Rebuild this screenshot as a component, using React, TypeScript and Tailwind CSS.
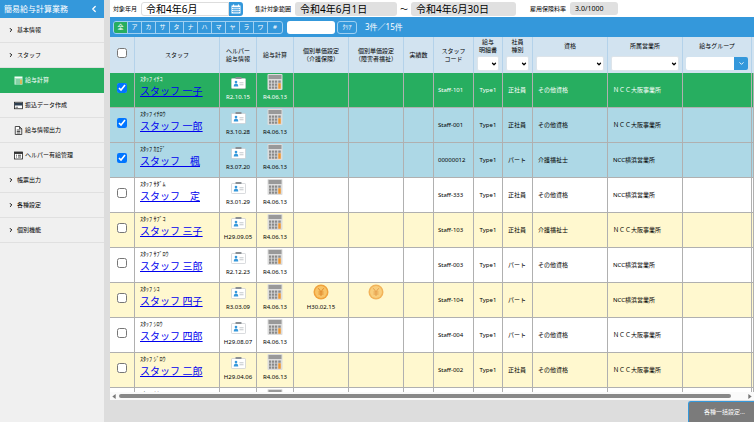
import React, { useState } from 'react';
import { ChevronDown, ChevronLeft, ChevronRight } from 'lucide-react';

const MENU = [
  { label: '基本情報' },
  { label: 'スタッフ' },
  { label: '給与計算', icon: 'calc', active: true },
  { label: '振込データ作成', icon: 'card' },
  { label: '給与情報出力', icon: 'file' },
  { label: 'ヘルパー有給管理', icon: 'list' },
  { label: '帳票出力' },
  { label: '各種設定' },
  { label: '個別機能' },
];

const KANA = ['全', 'ア', 'カ', 'サ', 'タ', 'ナ', 'ハ', 'マ', 'ヤ', 'ラ', 'ワ', '#'];

const STAFF = [
  { kana: 'ｽﾀｯﾌ ｲﾁｺ', name: 'スタッフ 一子', helper: 'R2.10.15', code: 'Staff-101', kind: '正社員', license: 'その他資格', office: 'ＮＣＣ大阪事業所' },
  { kana: 'ｽﾀｯﾌ ｲﾁﾛｳ', name: 'スタッフ 一郎', helper: 'R3.10.28', code: 'Staff-001', kind: '正社員', license: 'その他資格', office: 'ＮＣＣ大阪事業所' },
  { kana: 'ｽﾀｯﾌ ｶｴﾃﾞ', name: 'スタッフ　楓', helper: 'R3.07.20', code: '00000012', kind: 'パート', license: '介護福祉士', office: 'NCC横浜営業所' },
  { kana: 'ｽﾀｯﾌ ｻﾀﾞﾑ', name: 'スタッフ　定', helper: 'R3.01.29', code: 'Staff-333', kind: '正社員', license: 'その他資格', office: 'NCC横浜営業所' },
  { kana: 'ｽﾀｯﾌ ｻﾌﾞｺ', name: 'スタッフ 三子', helper: 'H29.09.05', code: 'Staff-103', kind: '正社員', license: '介護福祉士', office: 'ＮＣＣ大阪事業所' },
  { kana: 'ｽﾀｯﾌ ｻﾌﾞﾛｳ', name: 'スタッフ 三郎', helper: 'R2.12.23', code: 'Staff-003', kind: 'パート', license: 'その他資格', office: 'NCC横浜営業所' },
  { kana: 'ｽﾀｯﾌ ｼｺ', name: 'スタッフ 四子', helper: 'R3.03.09', code: 'Staff-104', kind: 'パート', license: '', office: 'NCC横浜営業所', care: 'H30.02.15', coin: true },
  { kana: 'ｽﾀｯﾌ ｼﾛｳ', name: 'スタッフ 四郎', helper: 'H29.08.07', code: 'Staff-004', kind: 'パート', license: 'その他資格', office: 'ＮＣＣ大阪事業所' },
  { kana: 'ｽﾀｯﾌ ｼﾞﾛｳ', name: 'スタッフ 二郎', helper: 'H29.04.06', code: 'Staff-002', kind: '正社員', license: 'その他資格', office: 'ＮＣＣ大阪事業所' },
];

const MenuIcon = ({ type }) => {
  if (type === 'calc') {
    return (
      <svg viewBox="0 0 18 18" className="h-[9px] w-[9px]">
        <rect x="1" y="1" width="16" height="16" fill="#f4fff8" />
        <path d="M1 6h16M1 10h16M1 14h16M6 6v11M10 6v11" stroke="#27ae60" strokeWidth="1.3" />
        <path d="M14 7v9" stroke="#f39c12" strokeWidth="2.4" />
      </svg>
    );
  }
  if (type === 'card') {
    return (
      <svg viewBox="0 0 18 18" className="h-[9px] w-[9px]">
        <rect x="0.8" y="2.5" width="16.4" height="13" fill="#fff" stroke="#222" strokeWidth="1.6" />
        <path d="M1 4h16v5H1z" fill="#2c3e50" />
        <path d="M3 12.5h5" stroke="#333" strokeWidth="1.4" />
      </svg>
    );
  }
  if (type === 'file') {
    return (
      <svg viewBox="0 0 18 18" className="h-[9px] w-[9px]" fill="none" stroke="#222" strokeWidth="1.6">
        <path d="M2.5 1h8.5l4.5 4.5V17h-13z" fill="#fff" />
        <path d="M11 1v4.5h4.5M5.5 8h7M5.5 11h7M5.5 14h7" />
      </svg>
    );
  }
  return (
    <svg viewBox="0 0 18 18" className="h-[9px] w-[9px]" fill="none" stroke="#222" strokeWidth="1.6">
      <rect x="1" y="2" width="16" height="14" fill="#fff" />
      <path d="M1 4h16" strokeWidth="3.5" />
      <path d="M4 8.5h2M8 8.5h6M4 12h2M8 12h6" />
    </svg>
  );
};

const IdCardIcon = () => (
  <svg viewBox="0 0 30 24" className="block h-3 w-[15px]">
    <rect x="1" y="3" width="28" height="20" rx="1.5" fill="#fff" stroke="#c8ccd0" strokeWidth="1.4" />
    <rect x="9" y="0" width="12" height="4" rx="1" fill="#8b9095" />
    <circle cx="10" cy="10" r="2.6" fill="#3498db" />
    <path d="M5.5 19c0-4.500 2-6 4.500-6s4.500 1.500 4.500 6z" fill="#3498db" />
    <path d="M17 11.5h8M17 15.500h8" stroke="#b4bac0" strokeWidth="1.6" />
  </svg>
);

const CalculatorIcon = () => (
  <svg viewBox="0 0 32 32" className="block h-4 w-4">
    <rect x="1" y="0" width="30" height="32" rx="2" fill="#dcdcdc" />
    <rect x="3" y="2" width="26" height="8" fill="#999" />
    {[13, 19, 25].map((y) =>
      [4, 10, 16].map((x) => <rect key={`${x}-${y}`} x={x} y={y} width="4.5" height="4.5" fill="#8a8a8a" />)
    )}
    <rect x="22.5" y="13" width="5" height="4.5" fill="#8a8a8a" />
    <rect x="22.5" y="18.5" width="5" height="11" fill="#f0962e" />
  </svg>
);

const CoinIcon = () => (
  <svg viewBox="0 0 32 32" className="block h-4 w-4" fill="none">
    <circle cx="16" cy="16" r="15" fill="#f0a23c" />
    <circle cx="16" cy="16" r="12" fill="#f8c468" />
    <path d="M10.5 8.5l5.5 7 5.5-7M16 15.5V24M11 16h10M11 20h10" stroke="#e08a2c" strokeWidth="2" />
  </svg>
);

const CalendarIcon = () => (
  <svg viewBox="0 0 20 20" className="h-[10px] w-[10px]">
    <path d="M1 3h18v16H1z" fill="#fff" />
    <path d="M5 1v4M15 1v4" stroke="#fff" strokeWidth="2.5" />
    <path d="M2 7h16M2 11h16M2 15h16M6 7v11M10 7v11M14 7v11" stroke="#3498db" strokeWidth="1.3" />
  </svg>
);

const FilterSelect = ({ label }) => (
  <div className="relative mx-[3px] mt-[2px]">
    <select aria-label={label} className="block h-[15px] w-full appearance-none rounded-[2px] border border-[#dde4ea] bg-white">
      <option></option>
    </select>
    <ChevronDown className="pointer-events-none absolute right-[2px] top-[5px] h-[6px] w-[6px] text-black" strokeWidth={5} />
  </div>
);

const th = 'border-r border-[#b4d2ea] p-0 text-center align-middle font-normal';
const thTop = 'border-r border-[#b4d2ea] p-0 text-center align-top font-normal';
const td = 'border-b border-r border-[#b0b0b0] p-0 align-middle';
const tdTop = 'border-b border-r border-[#b0b0b0] p-0 align-top';

const StaffRow = ({ staff, index, checked, onToggle }) => {
  let tone = index % 2 === 0 ? 'bg-[#fff8cf]' : 'bg-white';
  if (checked) tone = 'bg-[#add8e6]';
  if (index === 0) tone = 'bg-[#27ae60] text-white';

  return (
    <tr className={`h-[35px] ${tone}`}>
      <td className={td}>
        <input type="checkbox" aria-label={staff.name} checked={checked} onChange={onToggle} className="mx-auto mb-1 block h-[10px] w-[10px]" />
      </td>
      <td className={`${tdTop} pl-[5px] pt-[2px]`}>
        <div>{staff.kana}</div>
        <a href="#" className="block whitespace-nowrap text-[10px] leading-[16px] text-[#0000ee] underline">{staff.name}</a>
      </td>
      <td className={`${tdTop} pt-[4px]`}>
        <div className="flex flex-col items-center gap-[4px]">
          <IdCardIcon />
          <span>{staff.helper}</span>
        </div>
      </td>
      <td className={`${tdTop} pt-[1px]`}>
        <div className="flex flex-col items-center gap-[3px]">
          <CalculatorIcon />
          <span>R4.06.13</span>
        </div>
      </td>
      <td className={`${tdTop} pt-[1px]`}>
        {staff.care && (
          <div className="flex flex-col items-center gap-[3px]">
            <CoinIcon />
            <span>{staff.care}</span>
          </div>
        )}
      </td>
      <td className={`${tdTop} pt-[1px]`}>
        {staff.coin && <div className="flex justify-center opacity-80"><CoinIcon /></div>}
      </td>
      <td className={td}></td>
      <td className={`${td} pl-[4px]`}>{staff.code}</td>
      <td className={`${td} text-center`}>Type1</td>
      <td className={`${td} pl-[5px]`}>{staff.kind}</td>
      <td className={`${td} pl-[5px]`}>{staff.license}</td>
      <td className={`${td} pl-[5px]`}>{staff.office}</td>
      <td className={td}></td>
      <td className={td}></td>
    </tr>
  );
};

export default function App() {
  const [checked, setChecked] = useState([0, 1, 2]);
  const [initial, setInitial] = useState('全');

  const toggle = (i) => {
    setChecked(checked.includes(i) ? checked.filter((n) => n !== i) : [...checked, i]);
  };

  return (
    <div className="flex h-screen gap-[6px] overflow-hidden bg-[#dddddd] font-['Noto_Sans','Noto_Sans_CJK_JP',sans-serif] text-[6px] leading-[8px] text-black">
      <aside className="w-[104px] shrink-0 bg-[#f0f0f0]">
        <header className="flex h-[18px] items-center justify-between bg-[#3498db] pl-1 pr-[5px] text-[8px] text-white">
          <span>簡易給与計算業務</span>
          <button aria-label="メニューを閉じる"><ChevronLeft className="h-[10px] w-[10px]" strokeWidth={3} /></button>
        </header>
        <nav>
          {MENU.map((item) => (
            <a
              key={item.label}
              href="#"
              className={`flex h-[25px] items-center border-b ${item.active ? 'border-[#27ae60] bg-[#27ae60] text-white' : 'border-[#e0e0e0]'} ${item.icon ? 'gap-[2px] pl-[14px]' : 'gap-[3px] pl-[8px]'}`}
            >
              {item.icon ? <MenuIcon type={item.icon} /> : <ChevronRight className="h-[6px] w-[6px]" strokeWidth={4} />}
              {item.label}
            </a>
          ))}
        </nav>
      </aside>

      <main className="flex min-w-0 flex-1 flex-col">
        <div className="flex h-[17px] shrink-0 items-center bg-white pl-[3px]">
          <label htmlFor="month" className="mr-[4px]">対象年月</label>
          <input id="month" defaultValue="令和4年6月" className="h-[14px] w-[88px] rounded-l-[3px] border border-[#ddd] pl-[4px] text-[10px]" />
          <button aria-label="カレンダー" className="flex h-[14px] w-[14px] items-center justify-center rounded-r-[3px] bg-[#3498db]">
            <CalendarIcon />
          </button>
          <label htmlFor="from" className="ml-[12px] mr-[4px]">集計対象範囲</label>
          <input id="from" readOnly value="令和4年6月1日" className="h-[14px] w-[102px] rounded-[3px] bg-[#e0e0e0] pl-[5px] text-[10px]" />
          <span className="w-[14px] text-center text-[8px]">～</span>
          <input aria-label="集計終了日" readOnly value="令和4年6月30日" className="h-[14px] w-[105px] rounded-[3px] bg-[#e0e0e0] pl-[5px] text-[10px]" />
          <label htmlFor="rate" className="ml-[14px] mr-[4px]">雇用保険料率</label>
          <input id="rate" readOnly value="3.0/1000" className="h-[13px] w-[48px] rounded-[3px] bg-[#e0e0e0] pl-[5px] text-[7px]" />
        </div>

        <div className="flex h-[20px] shrink-0 items-center bg-[#3498db] pl-[3px] text-white">
          <div className="flex overflow-hidden rounded-[3px] border border-[#9fd0f2]">
            {KANA.map((k) => (
              <button
                key={k}
                onClick={() => setInitial(k)}
                className={`h-[11px] w-[14px] border-r border-[#9fd0f2] last:border-r-0 ${k === initial ? 'bg-[#27ae60]' : ''}`}
              >
                {k}
              </button>
            ))}
          </div>
          <input aria-label="スタッフ検索" className="ml-[4px] h-[13px] w-[48px] rounded-[3px] bg-white pl-1 text-[8px] text-black" />
          <button className="ml-[2px] h-[13px] w-[20px] rounded-[3px] border border-[#9fd0f2]">ｸﾘｱ</button>
          <span className="ml-[8px] text-[8px]">3件／15件</span>
        </div>

        <div className="min-h-0 flex-1 overflow-hidden bg-white">
          <table className="w-full table-fixed border-separate border-spacing-0">
            <colgroup>
              <col className="w-[25px]" />
              <col className="w-[85px]" />
              <col className="w-[37px]" />
              <col className="w-[37px]" />
              <col className="w-[55px]" />
              <col className="w-[55px]" />
              <col className="w-[30px]" />
              <col className="w-[40px]" />
              <col className="w-[29px]" />
              <col className="w-[30px]" />
              <col className="w-[75px]" />
              <col className="w-[75px]" />
              <col />
              <col className="w-[2px]" />
            </colgroup>
            <thead>
              <tr className="h-[36px] bg-[#d2e3f0]">
                <th className={th}>
                  <input type="checkbox" aria-label="全選択" className="mx-auto mb-1 block h-[10px] w-[10px]" />
                </th>
                <th className={th}>スタッフ</th>
                <th className={th}>ヘルパー<br />給与情報</th>
                <th className={th}>給与計算</th>
                <th className={th}>個別単価設定<br />（介護保険）</th>
                <th className={th}>個別単価設定<br />（障害者福祉）</th>
                <th className={th}>実績数</th>
                <th className={th}>スタッフ<br />コード</th>
                <th className={thTop}>
                  <div className="pt-[1px]">給与<br />明細書</div>
                  <FilterSelect label="給与明細書" />
                </th>
                <th className={thTop}>
                  <div className="pt-[1px]">社員<br />種別</div>
                  <FilterSelect label="社員種別" />
                </th>
                <th className={thTop}>
                  <div className="pb-[4px] pt-[5px]">資格</div>
                  <FilterSelect label="資格" />
                </th>
                <th className={thTop}>
                  <div className="pb-[4px] pt-[5px]">所属営業所</div>
                  <FilterSelect label="所属営業所" />
                </th>
                <th className={thTop}>
                  <div className="pb-[4px] pt-[5px]">給与グループ</div>
                  <div className="mx-[3px] mt-[3px] flex h-[13px]">
                    <input aria-label="給与グループ" className="min-w-0 flex-1 rounded-l-[2px] bg-white" />
                    <button aria-label="給与グループを選択" className="flex w-[14px] items-center justify-center rounded-r-[2px] bg-[#3498db] text-white">
                      <ChevronDown className="h-[7px] w-[7px]" strokeWidth={3} />
                    </button>
                  </div>
                </th>
                <th className="p-0"></th>
              </tr>
            </thead>
            <tbody>
              {STAFF.map((staff, i) => (
                <StaffRow key={staff.code} staff={staff} index={i} checked={checked.includes(i)} onToggle={() => toggle(i)} />
              ))}
              <tr className="h-[35px]">
                <td className={td}></td>
                <td className={`${tdTop} pl-[5px] pt-[2px]`}>ｽﾀｯﾌ ﾅﾅｺ</td>
                <td className={`${tdTop} pt-[4px]`}><div className="flex justify-center"><IdCardIcon /></div></td>
                <td className={`${tdTop} pt-[1px]`}><div className="flex justify-center"><CalculatorIcon /></div></td>
                {Array.from({ length: 10 }, (_, i) => <td key={i} className={td}></td>)}
              </tr>
            </tbody>
          </table>
        </div>

        <div className="flex h-[8px] shrink-0 items-center gap-[3px] bg-[#fafafa] px-[2px]">
          <svg viewBox="0 0 4 6" className="h-[5px] w-[4px]"><path d="M4 0v6L0 3z" fill="#777" /></svg>
          <div className="mr-[14px] h-[4px] flex-1 rounded-full bg-[#888]" />
          <svg viewBox="0 0 4 6" className="h-[5px] w-[4px]"><path d="M0 0v6l4-3z" fill="#777" /></svg>
        </div>

        <footer className="flex h-[22px] shrink-0 justify-end pt-[1px]">
          <button className="w-[66px] rounded-tl-[3px] border-l border-t border-[#3498db] bg-[#7b7b7b] pl-[6px] text-white">各種一括設定...</button>
        </footer>
      </main>
    </div>
  );
}
